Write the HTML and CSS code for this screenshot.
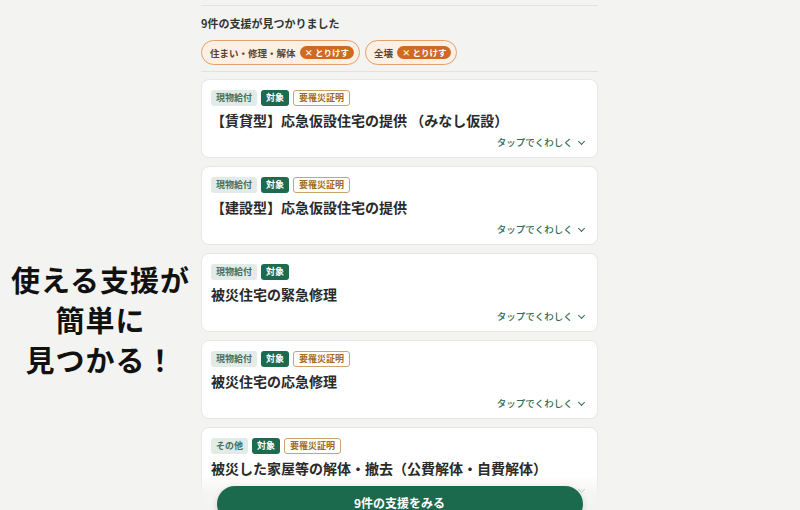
FILE: index.html
```html
<!DOCTYPE html>
<html lang="ja">
<head>
  <meta charset="UTF-8">
  <meta name="viewport" content="width=device-width, initial-scale=1.0">
  <title>支援をさがす</title>
  <link rel="stylesheet" href="styles.css">
</head>
<body>
  <div class="page">
    <div class="promo">
      <p>使える支援が<br>簡単に<br>見つかる！</p>
    </div>

    <div class="results">
      <h2 class="count">9件の支援が見つかりました</h2>
      <div class="filters">
        <span class="chip">住まい・修理・解体 <span class="chip-clear">× とりけす</span></span>
        <span class="chip">全壊 <span class="chip-clear">× とりけす</span></span>
      </div>

      <div class="list">
        <div class="card">
          <div class="tags">
            <span class="tag tag-kind">現物給付</span>
            <span class="tag tag-target">対象</span>
            <span class="tag tag-cert">要罹災証明</span>
          </div>
          <h3 class="card-title">【賃貸型】応急仮設住宅の提供 （みなし仮設）</h3>
          <div class="more">タップでくわしく <span class="chev"></span></div>
        </div>

        <div class="card">
          <div class="tags">
            <span class="tag tag-kind">現物給付</span>
            <span class="tag tag-target">対象</span>
            <span class="tag tag-cert">要罹災証明</span>
          </div>
          <h3 class="card-title">【建設型】応急仮設住宅の提供</h3>
          <div class="more">タップでくわしく <span class="chev"></span></div>
        </div>

        <div class="card">
          <div class="tags">
            <span class="tag tag-kind">現物給付</span>
            <span class="tag tag-target">対象</span>
          </div>
          <h3 class="card-title">被災住宅の緊急修理</h3>
          <div class="more">タップでくわしく <span class="chev"></span></div>
        </div>

        <div class="card">
          <div class="tags">
            <span class="tag tag-kind">現物給付</span>
            <span class="tag tag-target">対象</span>
            <span class="tag tag-cert">要罹災証明</span>
          </div>
          <h3 class="card-title">被災住宅の応急修理</h3>
          <div class="more">タップでくわしく <span class="chev"></span></div>
        </div>

        <div class="card">
          <div class="tags">
            <span class="tag tag-kind">その他</span>
            <span class="tag tag-target">対象</span>
            <span class="tag tag-cert">要罹災証明</span>
          </div>
          <h3 class="card-title">被災した家屋等の解体・撤去（公費解体・自費解体）</h3>
          <div class="more">タップでくわしく <span class="chev"></span></div>
        </div>
      </div>

      <div class="cta">
        <button type="button" class="cta-button">9件の支援をみる</button>
      </div>
    </div>
  </div>
</body>
</html>
```

FILE: styles.css
```css
html, body {
  margin: 0;
  height: 100%;
  overflow: hidden;
}
body {
  font-family: "Noto Sans CJK JP", "Noto Sans", sans-serif;
  background-color: #f3f4f2;
  color: #2b2b2b;
}
.page {
  display: grid;
  grid-template-columns: 201px 397px;
  height: 510px;
}
.promo {
  display: flex;
  align-items: center;
  justify-content: center;
  padding-top: 128px;
}
.promo p {
  margin: 0;
  text-align: center;
  font-size: 29px;
  font-weight: 700;
  line-height: 40px;
  color: #111;
  letter-spacing: 1px;
}
.results {
  position: relative;
  margin-top: 5px;
  border-top: 1px solid #e1e3e0;
}
.count {
  margin: 10px 0 0;
  font-size: 11px;
  line-height: 14px;
  font-weight: 700;
  color: #333;
}
.filters {
  display: flex;
  gap: 5px;
  margin-top: 10px;
  padding-bottom: 6px;
  border-bottom: 1px solid #e1e3e0;
}
.chip {
  display: inline-flex;
  align-items: center;
  gap: 4px;
  height: 23px;
  padding: 0 5px 0 8px;
  border: 1px solid #e3a06c;
  border-radius: 13px;
  background-color: #fcefe3;
  font-size: 9.5px;
  font-weight: 700;
  color: #5c4330;
}
.chip-clear {
  display: inline-block;
  height: 13px;
  line-height: 13px;
  padding: 0 5px;
  border-radius: 7px;
  background-color: #d06a22;
  color: #fff;
  font-size: 8.5px;
}
.list {
  display: flex;
  flex-direction: column;
  gap: 8px;
  margin-top: 7px;
}
.card {
  background-color: #fff;
  border: 1px solid #e6e8e5;
  border-radius: 8px;
  padding: 10px 12px 8px 9px;
}
.tags {
  display: flex;
  gap: 4px;
}
.tag {
  display: inline-block;
  height: 16px;
  line-height: 16px;
  padding: 0 5px;
  border-radius: 3px;
  font-size: 9px;
  font-weight: 700;
  box-sizing: border-box;
}
.tag-kind {
  background-color: #e2ebe6;
  color: #44705d;
}
.tag-target {
  background-color: #1e6a4e;
  color: #fff;
}
.tag-cert {
  border: 1px solid #caa46a;
  line-height: 14px;
  color: #9c6c1c;
  background-color: #fff;
}
.card-title {
  margin: 5px 0 0;
  font-size: 14px;
  line-height: 18px;
  font-weight: 700;
  color: #2a2a2a;
}
.more {
  margin-top: 6px;
  text-align: right;
  font-size: 9.5px;
  line-height: 14px;
  font-weight: 500;
  color: #2f6a55;
}
.chev {
  display: inline-block;
  width: 4px;
  height: 4px;
  margin: 0 1px 3px 4px;
  border-right: 1.2px solid #2f6a55;
  border-bottom: 1.2px solid #2f6a55;
  transform: rotate(45deg);
  vertical-align: middle;
}
/* sticky footer with the main button, fading the list behind it */
.cta {
  position: absolute;
  left: 0;
  right: 0;
  top: 472px;
  height: 40px;
  padding-top: 8px;
  background: linear-gradient(to bottom, rgba(243, 244, 242, 0.2), rgba(243, 244, 242, 0.85) 30%, #f3f4f2);
  text-align: center;
}
.cta-button {
  width: 366px;
  height: 36px;
  border: none;
  border-radius: 18px;
  background-color: #1c6a4e;
  color: #fff;
  font-family: inherit;
  font-size: 12px;
  font-weight: 700;
  padding-bottom: 4px;
  box-shadow: 0 2px 6px rgba(0, 0, 0, 0.15);
}
```
